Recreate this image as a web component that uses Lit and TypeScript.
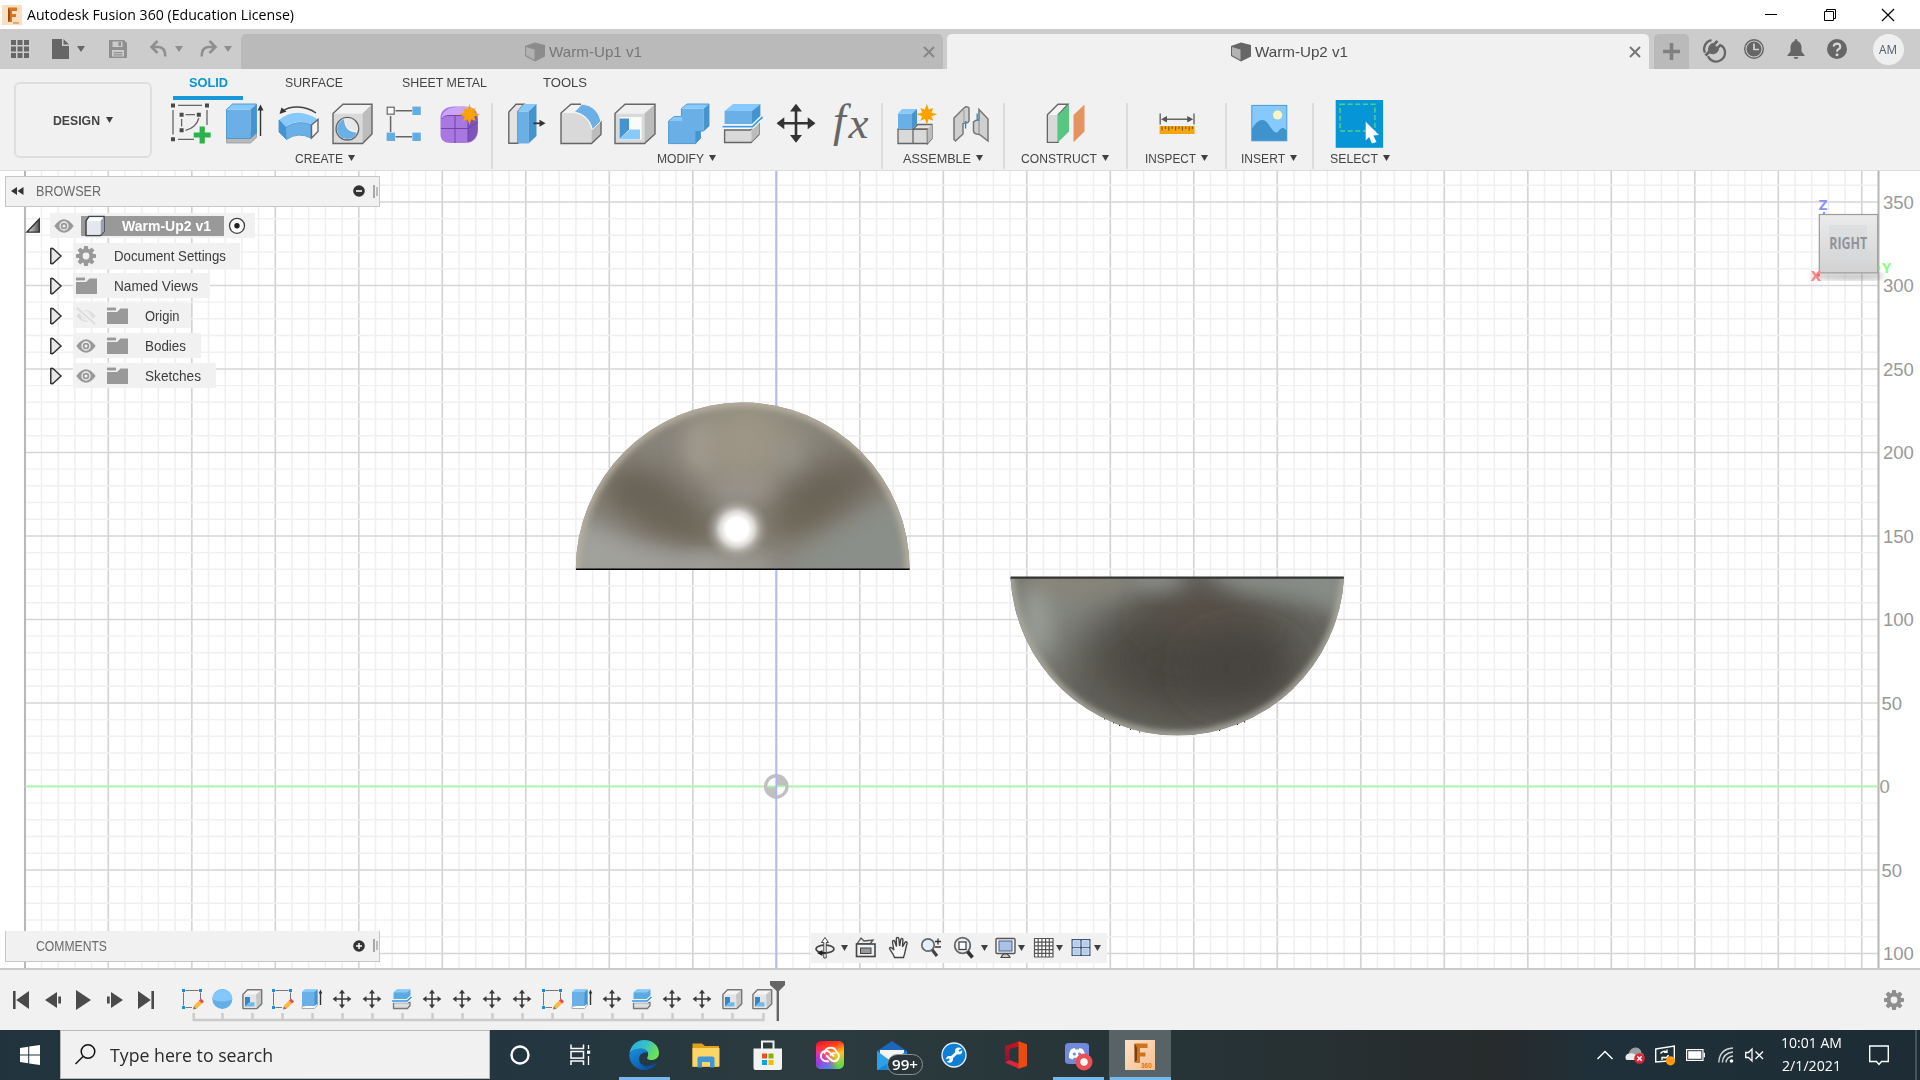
import { LitElement, html, svg, css } from "lit";
import { customElement, property } from "lit/decorators.js";

/** A single line of text condensed or stretched to a given width. */
@customElement("ui-text")
class UiText extends LitElement {
  @property({ type: Number }) w = 0;
  @property() text = "";
  static styles = css`
    :host { display: inline-block; white-space: nowrap; flex: none; }
    span { display: inline-block; transform-origin: 0 50%; }
  `;
  firstUpdated() {
    const s = this.renderRoot.querySelector("span") as HTMLElement;
    const n = s.offsetWidth ? s.getBoundingClientRect().width : 0;
    this.style.width = `${this.w}px`;
    if (n) s.style.transform = `scaleX(${this.w / n})`;
  }
  render() { return html`<span>${this.text}</span>`; }
}

const t = (text: string, w: number) => html`<ui-text .text=${text} .w=${w}></ui-text>`;
const icon = (w: number, h: number, body: unknown, cls = "") =>
  html`<svg class="ic ${cls}" width=${w} height=${h} viewBox="0 0 ${w} ${h}">${body}</svg>`;

const star = (cx: number, cy: number, r: number) => {
  const p: string[] = [];
  for (let i = 0; i < 16; i++) {
    const a = (i * Math.PI) / 8 - Math.PI / 2;
    const q = i % 2 ? r * 0.48 : i % 4 ? r * 0.86 : r;
    p.push(`${(cx + q * Math.cos(a)).toFixed(1)},${(cy + q * Math.sin(a)).toFixed(1)}`);
  }
  return svg`<polygon points=${p.join(" ")} fill="#f9a300"/>`;
};
const arrows = (cx: number, cy: number, r: number, w: number, hd: number, c: string) => svg`
  <path d="M${cx - r + 2} ${cy}H${cx + r - 2}M${cx} ${cy - r + 2}V${cy + r - 2}" stroke=${c} stroke-width=${w} fill="none"/>
  <path fill=${c} d="M${cx} ${cy - r}l${hd} ${hd * 1.3}h${-2 * hd}zM${cx} ${cy + r}l${hd} ${-hd * 1.3}h${-2 * hd}z
   M${cx - r} ${cy}l${hd * 1.3} ${hd}v${-2 * hd}zM${cx + r} ${cy}l${-hd * 1.3} ${hd}v${-2 * hd}z"/>`;

const G = "#666", F = "#d9d9d9", S = "#bcbcbc";
const B = "#6ab0e6", BL = "#87c9fb", BD = "#4694cf";

const I: Record<string, unknown> = {
  sketch: svg`
    <path d="M8 2.3H32M3 7V31.5M37 7V22M8 36.3H24" fill="none" stroke=${G} stroke-width="1.3"/>
    <path d="M15.5 11.7H25M11.6 16V23.5M28.8 15C27.5 21 22 26 15.5 27.3" fill="none" stroke=${G} stroke-width="1.3"/>
    <path fill="#4a4a4a" d="M1 .5h4v4h-4zM35 .5h4v4h-4zM1 34.3h4v4h-4zM9.6 9.7h4v4h-4zM26.8 9.7h4v4h-4zM9.6 25.3h4v4h-4z"/>
    <path d="M32.2 23.5V40.5M23.7 32H40.7" stroke="#2bb24c" stroke-width="5.2"/>`,
  extrude: svg`
    <path d="M2.5 35L2.5 40H26.5L32.5 34.5V28z" fill="#b9b9b9" stroke="#999" stroke-width=".8"/>
    <path d="M2.5 6.5H26.5V35.5H2.5z" fill=${B}/><path d="M2.5 6.5L8.5 1H32.5L26.5 6.5z" fill=${BL}/>
    <path d="M26.5 6.5L32.5 1V30L26.5 35.5z" fill=${BD}/><path d="M2.5 6.5L8.5 1H32.5V30L26.5 35.5H2.5z" fill="none" stroke=${BD} stroke-width=".9"/>
    <path d="M36.5 6V33" stroke="#333" stroke-width="1.4"/><path d="M36.5 1.5l3 6h-6z" fill="#333"/>`,
  revolve: svg`
    <path d="M4.5 8C12 2.5 27 2 38 10" fill="none" stroke="#444" stroke-width="1.5"/><path d="M1.5 11l2-6.5 5 4z" fill="#333"/>
    <path d="M1 17Q18 3 40.5 16.5L33 22Q20 14.5 8 24.5z" fill=${BL}/>
    <path d="M1 17L8 24.5Q20 16 33 22V35Q20 28.5 8.5 36.5L1 29z" fill=${B} stroke=${BD} stroke-width=".8"/>
    <path d="M1 17L8 24.5L8.5 36.5L1 29z" fill=${BD}/>
    <path d="M33.5 22L40 16.5V28.5L33.5 35z" fill="#f4f4f4" stroke=${G} stroke-width="1.4"/>`,
  hole: svg`
    <path d="M1 10.5H30.5V40.5H1z" fill=${F}/><path d="M1 10.5L11 1.3H40L30.5 10.5z" fill="#f2f2f2"/><path d="M30.5 10.5L40 1.3V31L30.5 40.5z" fill=${S}/>
    <path d="M1 10.5L11 1.3H40V31L30.5 40.5H1z" fill="none" stroke=${G} stroke-width="1.4"/>
    <circle cx="15.4" cy="25.7" r="11.3" fill="#f4f4f4" stroke=${G} stroke-width="1.4"/>
    <path d="M12 16.2A10.2 10.2 0 1 0 24.8 29.6Q12.5 29 12 16.2z" fill=${B}/><path d="M13 15.8Q13.2 28 25.3 28.2A10.3 10.3 0 0 0 13 15.8z" fill="#e8e8e8"/>`,
  pattern: svg`
    <path d="M9.5 7.7H26M4.6 13V29M9.5 33.7H26" stroke=${G} stroke-width="1.5"/>
    <rect x="1.2" y="4.2" width="7" height="7" fill="#fafafa" stroke=${G} stroke-width="1.2"/>
    <rect x="26.4" y="3.6" width="8.4" height="8.4" fill="#62ade6"/><rect x=".6" y="29.6" width="8.4" height="8.4" fill="#62ade6"/><rect x="26.4" y="29.6" width="8.4" height="8.4" fill="#62ade6"/>`,
  form: svg`
    <path d="M.5 15C.5 6 8 3 16 3.5H24C34 3.5 38 8 38 16V27C38 34 34 40 25 40H11C4 40 .5 37 .5 31z" fill="#a878e0"/>
    <path d="M2 13C5 5 12 4 20 4H30C35 6 34 10 28 12.5H9C5 12.5 4 14 2 17z" fill="#cba3f7"/>
    <path d="M28 13C33 10 37 10 37.5 17V28C37 34 32 39 28 39z" fill="#7f53b8"/>
    <path d="M1 25.5H28L37.5 19.5M15 12.5V40M2 16C4 12.5 7 12.5 10 12.5H28V39" fill="none" stroke="#6f45a5" stroke-width="1"/>${star(29.4, 11.5, 10.5)}`,
  press: svg`
    <path d="M3.8 9L11 1.3H19L13 8.5V40.3H3.8z" fill="#e3e3e3" stroke=${G} stroke-width="1.4"/>
    <path d="M12.5 8.5H23.5V40.5H12.5z" fill=${B}/><path d="M12.5 8.5L19 1H31.5L23.5 8.5z" fill=${BL}/><path d="M23.5 8.5L31.5 1V33L23.5 40.5z" fill=${BD}/>
    <path d="M28.5 20.3H36" stroke="#333" stroke-width="1.7"/><path d="M40.5 20.3l-6 3.5v-7z" fill="#333"/>`,
  fillet: svg`
    <path d="M2 10L12 1.3H23L14 9.5Q29 12 32.5 27V40.5H2z" fill="#f3f3f3"/><path d="M2 10H14Q29 12 32.5 27V40.5H2z" fill=${F}/>
    <path d="M32.5 27L42 18V31.5L32.5 40.5z" fill=${S}/>
    <path d="M22 1.3H12L2 10V40.5H32.5L42 31.5V18" fill="none" stroke=${G} stroke-width="1.4"/>
    <path d="M15.5 9L23 1Q38 2.5 42 18L33.5 26.5Q30 11.5 15.5 9z" fill=${B} stroke="#f1f1f1" stroke-width="1"/>`,
  shell: svg`
    <path d="M2 10.5H31.5V40.5H2z" fill=${F}/><path d="M2 10.5L12 1.3H42L31.5 10.5z" fill="#f0f0f0"/><path d="M31.5 10.5L42 1.3V31L31.5 40.5z" fill=${S}/>
    <path d="M2 10.5L12 1.3H42V31L31.5 40.5H2z" fill="none" stroke=${G} stroke-width="1.4"/>
    <rect x="6.6" y="14" width="22" height="22.7" fill="#fafafa"/><path d="M6.6 15.5H16V26.5L6.6 36z" fill=${BD}/><path d="M6.6 36.2L16.5 26.5H27V36.2z" fill=${BL}/>`,
  combine: svg`
    <path d="M1.6 18H14.4V5.7H36.6V28H29.4V40.6H1.6z" fill=${B}/>
    <path d="M14.4 5.7L20 1H42L36.6 5.7zM1.6 18L7 14H14.4V18z" fill=${BL}/><path d="M36.6 5.7L42 1V23L36.6 28zM28.4 28H33.5V35.5L28.4 40.6z" fill=${BD}/>
    <path d="M1.6 18L7 13.5H14.4V5.7L20 1H42V23L36.6 28H33.5V35.5L28.4 40.6H1.6z" fill="none" stroke=${BD} stroke-width=".9"/>`,
  split: svg`
    <path d="M3.6 27H29L38 19.5V31.5L30 39.5H3.6z" fill=${F} stroke=${G} stroke-width="1.4"/><path d="M30.5 27L38 20V31L30.5 39z" fill=${S}/>
    <path d="M3.6 8H31V21H3.6z" fill=${B}/><path d="M3.6 8L12 1H39.4L31 8z" fill=${BL}/><path d="M31 8L39.4 1V13L31 21z" fill=${BD}/>
    <path d="M1.5 23.7H31.5L41.5 14" fill="none" stroke="#fff" stroke-width="4"/><path d="M1.5 23.7H31.5L41.5 14" fill="none" stroke="#3f9ee6" stroke-width="1.8"/>`,
  move: arrows(21, 20.3, 19.5, 2.6, 6, "#333"),
  fx: svg`<text x="4" y="32.5" class="fx" font-size="46">f</text><text x="19.5" y="35.2" class="fx" font-size="45">x</text>`,
  comp: svg`
    <path d="M2 26H17V40.5H2zM17 26H31.5V40.5H17z" fill=${F} stroke=${G} stroke-width="1.3"/><path d="M17 26L22 21.5H36V35.5L31.5 40.5V26z" fill="#e4e4e4" stroke=${G} stroke-width="1.3"/><path d="M31.5 26L36 21.5V35.5L31.5 40.5z" fill=${S}/>
    <path d="M2 10.5H16V26H2z" fill=${B}/><path d="M2 10.5L6 6H21L16 10.5z" fill=${BL}/><path d="M16 10.5L21 6V21.5L16 26z" fill=${BD}/>${star(30.8, 11.3, 10.5)}`,
  joint: svg`
    <path d="M4 15L14 5Q17 2.5 19 5V18Q18 20.5 15 20L13 20.5V31L5.5 38L4 36.5z" fill="#cfcfcf" stroke="#777" stroke-width="1.5"/>
    <path d="M14 7V19" stroke="#999" stroke-width="1"/>
    <path d="M29 6.5L38 16V38L29.5 31.5Q23.5 31 23.5 28V19Q26 16.5 29 17z" fill="#cfcfcf" stroke="#777" stroke-width="1.5"/><path d="M29 17V31" stroke="#888" stroke-width="1"/>
    <path d="M15.6 18V25.5M27.2 10.5V18" stroke="#1f8fe0" stroke-width="1.4"/>`,
  construct: svg`
    <path d="M2.4 11.7L13 1.3H23L13 12V39.2H2.4z" fill="#f4f4f4" stroke=${G} stroke-width="1.4"/><path d="M3 12H12.5V38.5H3z" fill=${F}/>
    <path d="M13 12L24 1.5V28.5L13 39.2z" fill="#58c683"/><path d="M28.5 12L39.5 1.5V28.5L28.5 39.2z" fill="#e6945f"/>`,
  inspect: svg`
    <path d="M4.2 10.5V21.5M38 10.5V21.5M8 16.3H34" stroke=${G} stroke-width="1.4"/><path fill="#555" d="M5 16.3l6-3.2v6.4zM37.2 16.3l-6-3.2v6.4z"/>
    <rect x="3.6" y="23" width="35" height="8" fill="#f7a50e"/><path d="M6 23.5v4M9.4 23.5v2.4M12.8 23.5v4M16.2 23.5v2.4M19.6 23.5v4M23 23.5v2.4M26.4 23.5v4M29.8 23.5v2.4M33.2 23.5v4M36.4 23.5v2.4" stroke="#6d5a2a" stroke-width="1.1"/>`,
  insert: svg`
    <rect x="2.8" y="2.4" width="35" height="35.4" fill="#86c9fc"/><path d="M2.8 26C9 16 15 14 20 22C23 27 26 31 29 29C32 24 35 24 37.8 28V37.8H2.8z" fill="#3f92cb"/>
    <circle cx="28.6" cy="12" r="4.6" fill="#fdf6c3"/><rect x="2.8" y="2.4" width="35" height="35.4" fill="none" stroke="#4a9bd6" stroke-width="1"/>`,
  select: svg`
    <g transform="translate(-.5 0)"><rect x="-3.8" y="-3" width="47.4" height="47.8" fill="#0696d7"/><rect x=".6" y="1.3" width="34.8" height="26.6" fill="none" stroke="#54cf87" stroke-width="1.5" stroke-dasharray="5 2.6"/>
    <path d="M26.2 18.8L39.5 32L33.8 32.4L37 39L32.4 40.6L29.6 34L26.2 37.5z" fill="#fff"/></g>`,
};

const M: Record<string, unknown> = {
  sketch: svg`<path d="M3.5 1.5H16.5M1.5 3.5V16.5M18.5 3.5V10M3.5 18.5H10" fill="none" stroke="#777" stroke-width="1"/>
    <path fill="#1a8fe3" d="M0 0h3v3h-3zM17 0h3v3h-3zM0 17h3v3h-3z"/>
    <path d="M13 18.5L19 12.5" stroke="#f8bb3c" stroke-width="4"/><path d="M18.5 13l2-2" stroke="#ee4653" stroke-width="4"/><path d="M11 20.5l.8-3.3 2.6 2.5z" fill="#777"/>`,
  sphere: svg`<circle cx="10.3" cy="10" r="10" fill="#63aee6"/><path d="M.3 10.5A10 10 0 0 1 20.3 10.5Q10 14.5 .3 10.5z" fill="#84c7fa"/>`,
  shell: svg`<path d="M1 5.5L5.5 1H19.5L14 5.5z" fill="#f4f4f4"/><path d="M.9 5.5H14V19.5H.9z" fill="#e4e4e4"/><path d="M14 5.5L19.5 1V15L14.5 19.5z" fill="#c6c6c6"/><path d="M.9 5.5L5.5 .8H19.7V15L15 19.6H.9z" fill="none" stroke="#777" stroke-width="1.4" stroke-linejoin="round"/><path d="M3 8H8V13L3 17.5z" fill="#3786c4"/><path d="M3 17.5L7.5 13.3H12.5V17.5z" fill="#6fb9f0"/>`,
  extrude: svg`<path d="M0 17.5V19.5H12.5L15.5 16V14z" fill="#fff" stroke="#aaa"/><path d="M0 3L3 .5H15.5V14.5L12.5 17H0z" fill="#6ab0e6"/><path d="M12.5 3L15.5 .5V14.5L12.5 17z" fill="#4694cf"/><path d="M0 3L3 .5H15.5L12.5 3z" fill="#87c9fb"/><path d="M18.5 3V16" stroke="#333" stroke-width="1.4"/><path d="M18.5 .5l1.8 4h-3.6z" fill="#333"/>`,
  split: svg`<path d="M1.5 13.5H18V16.5L15.5 19.5H1.5z" fill="#ddd" stroke="#777" stroke-width="1.3"/><path d="M1.5 3.5L5 .5H18.5V8L15 10.5H1.5z" fill="#5fa9e2"/><path d="M1.5 3.5L5 .5H18.5L15 3.5z" fill="#87c9fb"/><path d="M0 12H15L19.5 8" fill="none" stroke="#fff" stroke-width="3.6"/><path d="M0 12H15L19.5 8" fill="none" stroke="#2f93e4" stroke-width="1.6"/>`,
  move: arrows(10, 10, 9.4, 1.6, 3, "#3a3a3a"),
};

const gear = (c: string) => icon(20, 20, svg`
  <g transform="translate(10 10)">${[0, 45, 90, 135].map(a => svg`<rect x="-2.1" y="-10" width="4.2" height="20" rx=".8" fill=${c} transform="rotate(${a})"/>`)}
  <circle r="5.4" fill="none" stroke=${c} stroke-width="4"/><circle r="3.4" fill="#f1f1f1"/></g>`);
const eye = icon(20, 14, svg`<path d="M.3 7Q10-6.5 19.7 7Q10 20.5 .3 7z" fill="#999"/><circle cx="10" cy="7" r="4" fill="none" stroke="#f1f1f1" stroke-width="1.3"/><circle cx="10" cy="7" r="1.5" fill="#f1f1f1"/>`);
const eyeOff = icon(20, 18, svg`<path d="M.5 9Q10-2.5 19.5 9Q10 20.5 .5 9z" fill="#dcdcdc"/><circle cx="10" cy="9" r="4" fill="none" stroke="#f1f1f1" stroke-width="1.4"/><path d="M0 0L20 17.5" stroke="#f1f1f1" stroke-width="5"/><path d="M1 1L19 17" stroke="#dcdcdc" stroke-width="1.8"/>`);
const folder = icon(21, 17, svg`<path d="M0 17V5H10L13.5 1.5H21V17z" fill="#999"/><path d="M0 3.4V.6H9V3.4z" fill="#999"/>`);
const tabCube = (dim: boolean) => icon(20, 20, dim
  ? svg`<path d="M0 4L10 .5L20 3V14.5L10 19.5L0 14z" fill="#8c8c8c"/><path d="M1 5L9.5 7.5V18L1 13.2z" fill="#b0b0b0"/>`
  : svg`<path d="M0 4L10 .5L20 3V14.5L10 19.5L0 14z" fill="#666"/><path d="M1 5L9.5 7.5V18L1 13.2z" fill="#b3b3b3"/>`);
const tri = (w = 7, c = "#404040") => icon(w, 6, svg`<path d="M0 0H${w}L${w / 2} 6z" fill=${c}/>`);
const cross = (c: string) => icon(12, 12, svg`<path d="M1 1L11 11M11 1L1 11" stroke=${c} stroke-width="2"/>`);
const expander = icon(12, 18, svg`<path d="M.8 1.5Q1.5 .8 3.5 2L11 9L3.5 16Q1.5 17.2 .8 16.5z" fill="#e9e9e9" stroke="#333" stroke-width="1.5"/>`);

const GROUPS: [string, number, number, string[]][] = [
  ["CREATE", 334, 48, ["sketch", "extrude", "revolve", "hole", "pattern", "form"]],
  ["MODIFY", 390, 47, ["press", "fillet", "shell", "combine", "split", "move", "fx"]],
  ["ASSEMBLE", 122, 68, ["comp", "joint"]],
  ["CONSTRUCT", 123, 76, ["construct"]],
  ["INSPECT", 99, 51, ["inspect"]],
  ["INSERT", 87, 44, ["insert"]],
  ["SELECT", 92, 48, ["select"]],
];
const TIMELINE = "sketch sphere shell sketch extrude move move split move move move move sketch extrude move split move move shell shell".split(" ");

const STEP = 83.5, OX = 776.3, OY = 786.4;

function grid() {
  const out: unknown[] = [];
  for (let i = -45; i <= 66; i++) {
    const x = OX + (i * STEP) / 5;
    const major = i % 5 === 0;
    out.push(svg`<path d="M${x} 171V968" stroke=${major ? "#d4d4d4" : "#efefef"} stroke-width=${major ? 1.7 : 1.5}/>`);
  }
  for (let j = -10; j <= 36; j++) {
    const y = OY - (j * STEP) / 5;
    const major = j % 5 === 0;
    out.push(svg`<path d="M25 ${y}H1878.5" stroke=${major ? "#d6d6d6" : "#f0f0f0"} stroke-width=${major ? 1.5 : 1.4}/>`);
  }
  return out;
}

const scene = svg`
  <defs>
    <clipPath id="h1"><path d="M575.8 569.5A166.9 166.9 0 0 1 909.6 569.5z"/></clipPath>
    <clipPath id="h2"><path d="M1010.5 577.5A167 167 0 0 0 1344 577.5z"/></clipPath>
    <filter id="b8" x="-60%" y="-60%" width="220%" height="220%"><feGaussianBlur stdDeviation="10"/></filter>
    <filter id="b14" x="-60%" y="-60%" width="220%" height="220%"><feGaussianBlur stdDeviation="17"/></filter>
    <filter id="b20" x="-80%" y="-80%" width="260%" height="260%"><feGaussianBlur stdDeviation="22"/></filter>
    <filter id="b3" x="-20%" y="-20%" width="140%" height="140%"><feGaussianBlur stdDeviation="3"/></filter>
    <radialGradient id="hl"><stop offset="0" stop-color="#fff"/><stop offset=".35" stop-color="#fff"/><stop offset=".55" stop-color="#efedea" stop-opacity=".8"/><stop offset=".75" stop-color="#c4c1bb" stop-opacity=".4"/><stop offset="1" stop-color="#a09d96" stop-opacity="0"/></radialGradient>
    <linearGradient id="cube" x1="0" y1="0" x2="0" y2="1"><stop offset="0" stop-color="#ebebeb"/><stop offset="1" stop-color="#d2d2d2"/></linearGradient>
  </defs>
  <rect x="0" y="171" width="1920" height="797" fill="#fff"/>
  ${grid()}
  <path d="M25 171V968M1878.5 171V968" stroke="#b8b8b8" stroke-width="2"/>
  <path d="M25 ${OY}H1878.5" stroke="#aaf7aa" stroke-width="1.9"/>
  <path d="M${OX} 171V968" stroke="#b6b6ff" stroke-width="1.9"/>
  <circle cx=${OX} cy=${OY} r="12.3" fill="#c0c0c0"/>
  <path d="M${OX} ${OY}V${OY - 9}A9 9 0 0 0 ${OX - 9} ${OY}zM${OX} ${OY}H${OX + 9}A9 9 0 0 1 ${OX} ${OY + 9}z" fill="#fff"/>
  <path d="M${OX - 9} ${OY}h18" stroke="#aaf7aa" stroke-width="1.8"/><path d="M${OX} ${OY - 12}v24" stroke="#b0b0f6" stroke-width="1.8"/>
  <g clip-path="url(#h1)">
    <rect x="570" y="400" width="345" height="172" fill="#88847a"/>
    <ellipse cx="745" cy="442" rx="48" ry="44" fill="#9d9585" filter="url(#b14)"/>
    <ellipse cx="700" cy="448" rx="14" ry="28" fill="#a29a8f" filter="url(#b8)"/>
    <ellipse cx="790" cy="460" rx="18" ry="16" fill="#97948b" filter="url(#b8)"/>
    <ellipse cx="655" cy="502" rx="62" ry="25" transform="rotate(28 655 502)" fill="#676256" filter="url(#b14)"/>
    <ellipse cx="638" cy="492" rx="26" ry="13" fill="#6a6559" filter="url(#b8)"/>
    <ellipse cx="676" cy="523" rx="42" ry="11" transform="rotate(17 676 523)" fill="#6a6453" opacity=".65" filter="url(#b8)"/>
    <ellipse cx="826" cy="491" rx="62" ry="25" transform="rotate(-28 826 491)" fill="#666155" filter="url(#b14)"/>
    <ellipse cx="800" cy="517" rx="34" ry="12" transform="rotate(-32 800 517)" fill="#6b6553" opacity=".65" filter="url(#b8)"/>
    <ellipse cx="742" cy="488" rx="32" ry="10" fill="#9b978f" filter="url(#b8)"/>
    <path d="M570 515L640 546L720 564V580H570z" fill="#a1a19d" filter="url(#b8)"/>
    <path d="M775 580L790 562L850 524L915 485V580z" fill="#8a8f89" filter="url(#b8)"/>
    <rect x="690" y="557" width="80" height="18" fill="#a3a19a" filter="url(#b8)"/>
    <path d="M575.8 575V569.5A166.9 166.9 0 0 1 909.6 569.5V575" fill="none" stroke="#b8b1a2" stroke-width="8" filter="url(#b3)"/>
    <circle cx="737" cy="529" r="32" fill="url(#hl)"/>
  </g>
  <path d="M576 569.3H909.6" stroke="#000" stroke-width="1.4"/>
  <g clip-path="url(#h2)">
    <rect x="1005" y="570" width="345" height="170" fill="#64635c"/>
    <ellipse cx="1195" cy="660" rx="100" ry="55" fill="#4a4740" filter="url(#b20)"/>
    <ellipse cx="1205" cy="614" rx="58" ry="20" fill="#564f46" filter="url(#b14)"/>
    <ellipse cx="1240" cy="668" rx="48" ry="26" fill="#45433c" filter="url(#b20)"/>
    <path d="M1000 570H1150L1110 600L1065 640L1055 690L1010 650z" fill="#84877f" filter="url(#b14)"/>
    <rect x="1030" y="568" width="95" height="26" fill="#89857a" filter="url(#b8)"/>
    <ellipse cx="1036" cy="622" rx="12" ry="34" fill="#9b9f97" filter="url(#b8)"/>
    <ellipse cx="1155" cy="578" rx="32" ry="12" fill="#8e918c" filter="url(#b8)"/>
    <path d="M1205 562H1350V622Q1320 602 1240 592L1210 576z" fill="#878c87" filter="url(#b8)"/>
    <path d="M1010.5 570V577.5A167 167 0 0 0 1344 577.5V570" fill="none" stroke="#acaba1" stroke-width="7.5" filter="url(#b3)"/>
  </g>
  <path d="M1010.6 577.7H1343.8" stroke="#333" stroke-width="2.2"/>
  <path fill="#222" d="M1104 718.5h1.1v1.1h-1.1zM1113 722.5h1.1v1.1h-1.1zM1119 725h1.1v1.1h-1.1zM1130 729h1.1v1.1h-1.1zM1139 731.5h1.1v1.1h-1.1zM1219 730h1.1v1.1h-1.1zM1237 724h1.1v1.1h-1.1zM1244 721.3h1.1v1.1h-1.1z"/>
  ${([[350, 7], [300, 6], [250, 5], [200, 4], [150, 3], [100, 2], [50, 1], [0, 0], [50, -1], [100, -2]] as [number, number][]).map(
    ([v, k]) => svg`<text class="ruler" x=${v === 0 ? 1879.5 : v === 50 ? 1881.5 : 1883} y=${OY - k * STEP + 6.6}>${v}</text>`)}
  <path d="M1812 274H1882V278Q1850 281 1812 277z" fill="#888" opacity=".7" filter="url(#b3)"/>
  <rect x="1819.3" y="214.5" width="58.4" height="58.4" fill="url(#cube)" stroke="#9b9b9b" stroke-width="1.2"/>
  <rect x="1829" y="225" width="38" height="36" fill="#d5d8dc" opacity=".55"/>
  <text class="face" x="1829.3" y="249" textLength="38" lengthAdjust="spacingAndGlyphs">RIGHT</text>
  <text class="axis" x="1818.7" y="210.4" fill="#8f8fff">Z</text><text class="axis" x="1811" y="281.2" fill="#ff8080">X</text><text class="axis" x="1882" y="273" fill="#8dfa8d">Y</text>
  <circle cx="1824" cy="213" r="1.2" fill="#8f8fff"/><circle cx="1879" cy="268" r="1.4" fill="#6cf06c"/><circle cx="1818.5" cy="275" r="1.8" fill="#f66"/>`;

const navIcons = {
  orbit: icon(24, 24, svg`<ellipse cx="12" cy="13" rx="9" ry="3.8" fill="none" stroke="#444" stroke-width="1.7"/><path d="M10.8 22V6.5H8.5L12 1.5L15.5 6.5H13.2V22z" fill="#fff" stroke="#444" stroke-width="1"/><path d="M4 17l5.5-3v6z" fill="#222"/><path d="M6 17H13" stroke="#222" stroke-width="1.8"/>`),
  look: icon(22, 24, svg`<path d="M2 8L6 2L9 5L18 4L15 8z" fill="#e6eaee" stroke="#555" stroke-width="1.3"/><rect x="1.5" y="8" width="18.5" height="12.5" fill="#eef1f4" stroke="#444" stroke-width="1.6"/><rect x="5.5" y="12" width="10.5" height="5.5" fill="#999" stroke="#444"/>`),
  pan: icon(22, 24, svg`<path d="M6.5 21.5C5 17 2.5 15 1.5 12.5C2 10.8 4 11.5 5.8 14L4.5 6C4.5 4 6.4 4 7 6L8.5 10.5L8.3 3C8.4 1 10.6 1 10.9 3L11.6 10L12.8 3.5C13.3 1.8 15 2.2 14.9 4L14.5 10.8L17 6.5C18.2 5 19.6 6.2 19 7.8C17.5 12 17.5 16 15.5 21.5z" fill="#f8f8f8" stroke="#444" stroke-width="1.4"/>`),
  zoom: icon(22, 24, svg`<circle cx="8" cy="9" r="6.2" fill="#e4eef4" stroke="#666" stroke-width="1.7"/><path d="M12.3 14L17 20" stroke="#444" stroke-width="3.2"/><path d="M18 2.5v6M15 5.5h6M15 11h6" stroke="#333" stroke-width="1.3"/>`),
  fit: icon(22, 24, svg`<circle cx="9.5" cy="9.5" r="7.8" fill="#e9eff3" stroke="#666" stroke-width="1.8"/><rect x="6" y="6" width="7" height="7.5" fill="#fff" stroke="#444" stroke-width="1.3"/><path d="M14.5 15.5L19.5 21.5" stroke="#333" stroke-width="3.6"/>`),
  display: icon(21, 24, svg`<rect x="1" y="2.5" width="19" height="15" rx="1" fill="#f4f4f4" stroke="#555" stroke-width="1.4"/><rect x="4" y="5" width="13" height="10" fill="#a9c2e8" stroke="#4a5f87" stroke-width="1"/><path d="M6 21.5Q7 19 9 18H12Q14 19 15 21.5z" fill="#ccc" stroke="#444" stroke-width="1.2"/>`),
  grid: icon(21, 24, svg`<rect x="1" y="2" width="19" height="19" fill="#fff"/><path d="M1 2.5H20M1 6.2H20M1 9.9H20M1 13.6H20M1 17.3H20M1 21H20M1.5 2V21.5M5.2 2V21.5M8.9 2V21.5M12.6 2V21.5M16.3 2V21.5M20 2V21.5" stroke="#555" stroke-width="1.2"/>`),
  views: icon(20, 24, svg`<rect x=".5" y="3" width="19" height="17" fill="#3e5272"/><path fill="#b5cdee" stroke="#dce8f8" stroke-width=".8" d="M2 4.5h7v6.2h-7zM11 4.5h7v6.2h-7zM2 12.5h7v6.2h-7zM11 12.5h7v6.2h-7z"/>`),
};

const TB: [unknown, string][] = [
  [icon(22, 22, svg`<circle cx="11" cy="11" r="8.5" fill="none" stroke="#fff" stroke-width="2.4"/>`), ""],
  [icon(26, 22, svg`<path d="M2 .5V4.5H14.5V.5M2 21V17H14.5V21" fill="none" stroke="#fff" stroke-width="1.5"/><rect x="2" y="7.5" width="12.5" height="6.6" fill="none" stroke="#fff" stroke-width="1.5"/><path d="M19.5 1V5M19.5 12V21" stroke="#fff" stroke-width="1.3"/><rect x="18" y="6.6" width="3.2" height="3.2" fill="#fff"/>`), ""],
  [icon(30, 30, svg`<defs><linearGradient id="eg1" x1="0" y1="0" x2="1" y2=".4"><stop offset="0" stop-color="#2aa7e2"/><stop offset=".55" stop-color="#35c1c8"/><stop offset="1" stop-color="#6be05a"/></linearGradient><linearGradient id="eg2" x1="0" y1="0" x2=".6" y2="1"><stop offset="0" stop-color="#1b8fe0"/><stop offset="1" stop-color="#0c57a8"/></linearGradient></defs>
    <path d="M.3 14C1.5 5.5 7.5 0 15 0C24 0 30 6 30 13C30 17.5 26.5 20 22.5 20C19 20 17.5 18.8 18.5 17C21 13 17 8.8 12.5 8.8C7 8.8 2 10.5 .3 14z" fill="url(#eg1)"/>
    <path d="M.3 15C2 10.5 6 8.8 12 8.8C16.5 8.8 17.5 11 18 12.5C12 12 9.5 16.5 10.2 20C11.2 25.5 17.5 28.5 26.5 24.5C24 28 20 30 15 30C6.5 30 0 23 .3 15z" fill="url(#eg2)"/>
    <path d="M18.3 12.6C12.5 12 9.6 16.5 10.3 20C11.3 25.4 18 28.5 28 22.8C27 25.5 24 28 21 29C12 28 8.5 21 11 16C12.5 13 15 11.5 18.3 12.6z" fill="#0d4f9a"/>`), "open"],
  [icon(28, 26, svg`<path d="M.5 1.5H10L13 4H27V25H.5z" fill="#dfa21c"/><path d="M.5 6H27.5V24.5H.5z" fill="#fbd667"/><path d="M5.5 25.5V16.5Q5.5 14.5 7.5 14.5H20.5Q22.5 14.5 22.5 16.5V25.5H18V20H10V25.5z" fill="#3f97d8"/>`), ""],
  [icon(30, 32, svg`<path d="M9 10V2.5H20.5V10" fill="none" stroke="#f2f2f2" stroke-width="2"/><path d="M.5 9.5H29V29Q29 31 27 31H2.5Q.5 31 .5 29z" fill="#f2f2f2"/><path fill="#f04e23" d="M9 14.5h5v5h-5z"/><path fill="#7cba01" d="M15.5 14.5h5v5h-5z"/><path fill="#03a4ee" d="M9 21h5v5h-5z"/><path fill="#feb800" d="M15.5 21h5v5h-5z"/>`), ""],
  [icon(28, 28, svg`<defs><linearGradient id="cc1" x1=".2" y1="0" x2=".6" y2="1"><stop offset="0" stop-color="#f8102c"/><stop offset=".3" stop-color="#ff4a1c"/><stop offset=".6" stop-color="#ffc21a"/><stop offset="1" stop-color="#5fd84a"/></linearGradient><radialGradient id="cc2" cx="0" cy=".85" r=".75"><stop offset="0" stop-color="#7a3cf0"/><stop offset=".5" stop-color="#d82ad0" stop-opacity=".9"/><stop offset="1" stop-color="#ff2a80" stop-opacity="0"/></radialGradient><radialGradient id="cc3" cx=".4" cy="1.05" r=".45"><stop offset="0" stop-color="#2f8cff"/><stop offset="1" stop-color="#2f8cff" stop-opacity="0"/></radialGradient></defs>
    <rect width="28" height="28" rx="5" fill="url(#cc1)"/><rect width="28" height="28" rx="5" fill="url(#cc2)"/><rect width="28" height="28" rx="5" fill="url(#cc3)"/>
    <path d="M12 20.2H10.2A5.2 5.2 0 1 1 13.6 11.2L17.5 15" fill="none" stroke="#fff" stroke-width="1.9" stroke-linecap="round"/><path d="M8.5 12A6.2 6.2 0 0 1 20.5 11A5 5 0 0 1 18.5 20.2Q16 20.2 14.5 18.5L10.5 14.8" fill="none" stroke="#fff" stroke-width="1.9" stroke-linecap="round"/><path d="M14 14.5L15.5 13Q17.5 11.5 19.5 12.5" fill="none" stroke="#fff" stroke-width="1.6"/>`), ""],
  [html`<span class="mail">${icon(30, 29, svg`<path d="M0 10L15 0L30 10V28H0z" fill="#1d66b8"/><path d="M3 9H27V20H3z" fill="#f5f5f5"/><path d="M0 10L15 21L30 10V29H0z" fill="#2ba2e8"/><path d="M0 29L19 17L30 10V29z" fill="#1a86d4"/>`)}<span class="badge">${t("99+", 26)}</span></span>`, ""],
  [icon(26, 26, svg`<circle cx="13" cy="13" r="12" fill="#0d7fd6" stroke="#e9f3fb" stroke-width="1.3"/><path d="M9 17L17 9.5" stroke="#fff" stroke-width="3"/><circle cx="8.5" cy="17.3" r="3.4" fill="#fff"/><circle cx="17.6" cy="9" r="3.6" fill="#fff"/><path d="M4.5 18.8L8.3 17.3M18 9L21.5 7" stroke="#0d7fd6" stroke-width="2"/>`), ""],
  [icon(24, 28, svg`<defs><linearGradient id="of" x1="0" y1="0" x2="0" y2="1"><stop offset="0" stop-color="#c2181d"/><stop offset="1" stop-color="#8d0f3b"/></linearGradient></defs><path d="M15 .3L1 5V21.5L5.5 19V8L15 5.5z" fill="url(#of)"/><path d="M1 21.5L5.5 19L15 22.5V27.8z" fill="#d8263c"/><path d="M14.5 .3L23 3.2V25L14.5 27.8z" fill="#ea4b13"/>`), ""],
  [icon(30, 30, svg`<path d="M6 3H22Q26 3 26 6V27L21 24H6Q2 24 2 21V6Q2 3 6 3z" fill="#7289da"/><path d="M6 18Q5.5 12 8.5 9L11.5 8L12.5 9.5H15.5L16.5 8L19.5 9Q22.5 12 22 18L18.5 19.5L17 17.8H11L9.5 19.5z" fill="#fff"/><circle cx="11.3" cy="14" r="1.6" fill="#7289da"/><circle cx="16.6" cy="14" r="1.6" fill="#7289da"/><circle cx="21" cy="22" r="8.5" fill="#ec4f57"/><circle cx="21" cy="22" r="3.7" fill="#fff"/>`), "open"],
  [icon(30, 30, svg`<defs><linearGradient id="fu" x1="0" y1="0" x2="1" y2="1"><stop offset="0" stop-color="#fbe3cb"/><stop offset="1" stop-color="#f5bf8e"/></linearGradient></defs><rect width="30" height="30" fill="url(#fu)"/><path d="M9.5 3.5H22.5V8H15V12.5H20.5V16.5H15V23H10.5z" fill="#d07320"/><path d="M9.5 3.5L12 7.5V20L9.5 23z" fill="#7a3d10"/><text x="16" y="28.2" font-size="6.5" font-weight="700" fill="#e2701c" font-family="Liberation Sans">360</text>`), "open active"],
];

@customElement("app-root")
class AppRoot extends LitElement {
  static styles = css`
    :host { display: block; width: 1920px; height: 1080px; overflow: hidden; font-family: "Liberation Sans", Arial, sans-serif; color: #3c3c3c; background: #f1f1f1; }
    * { box-sizing: border-box; }
    .ic { display: block; flex: none; overflow: visible; }
    .title { height: 29px; background: #fff; display: flex; align-items: center; padding: 0 26px 0 2px; color: #000; font: 14.5px "Open Sans", sans-serif; }
    .title .name { margin-left: 5px; flex: 1; display: flex; }
    .title .wb { display: flex; gap: 46.5px; align-items: center; }
    .tabs { height: 40px; background: #ccc; display: flex; align-items: flex-end; }
    .quick { width: 241px; height: 40px; display: flex; align-items: center; padding-left: 11px; }
    .tab { height: 35px; display: flex; align-items: center; border-radius: 5px 5px 0 0; font-size: 14.8px; }
    .tab .mid { flex: 1; display: flex; align-items: center; gap: 4px; }
    .t1 { width: 702px; background: #bababa; color: #777; padding: 0 8px 0 284px; margin-right: 4px; }
    .t2 { width: 702px; background: #f1f1f1; color: #4a4a4a; padding: 0 8px 0 284px; margin-right: 5px; }
    .plus { width: 35px; height: 35px; background: #bababa; border-radius: 5px 5px 0 0; display: flex; align-items: center; justify-content: center; }
    .help { flex: 1; height: 40px; display: flex; align-items: center; gap: 21.4px; padding-left: 14px; }
    .avatar { width: 31px; height: 31px; border-radius: 50%; background: #efefef; display: flex; align-items: center; justify-content: center; font: 12.5px "Open Sans", sans-serif; color: #4f5a6b; margin-left: 4px; }
    .ribbon { height: 102px; background: #f1f1f1; border-bottom: 1px solid #dcdcdc; display: flex; font-size: 13.7px; color: #444; }
    .design { width: 138px; height: 76px; margin: 12.5px 6.5px 0 14px; border: 2px solid #dedede; border-radius: 6px; display: flex; align-items: center; justify-content: center; gap: 6px; font-weight: 700; padding: 1px 1px 0 0; }
    .rmain { display: flex; flex-direction: column; }
    .rtabs { display: flex; height: 31px; padding-top: 5px; line-height: 18px; }
    .rt { display: flex; justify-content: center; height: 26px; border-bottom: 0; }
    .rt.on { color: #0696d7; font-weight: 700; border-bottom: 4px solid #1798d9; width: 70px; margin-left: 14.5px; }
    .groups { display: flex; }
    .group { height: 66px; margin-top: 2.5px; border-right: 2px solid #dcdcdc; display: flex; flex-direction: column; align-items: center; }
    .group:last-child { border: 0; }
    .icons { display: flex; gap: 14px; height: 40px; }
    .lab { display: flex; align-items: center; gap: 5px; height: 18px; margin-top: 7px; }
    .lab .ic { margin-top: -2px; }
    .fx { font-family: "Liberation Serif", serif; font-style: italic; fill: #666; }
    .canvas { height: 797px; position: relative; overflow: hidden; }
    .ruler { font: 18.5px "Liberation Sans", sans-serif; fill: #999; }
    .face { font: 700 16px "Open Sans", sans-serif; fill: #909499; }
    .axis { font: 700 15px "Open Sans", sans-serif; }
    .panel { position: absolute; left: 5px; width: 375px; height: 31px; background: #f1f1f1; border: 1px solid #c6c6c6; border-bottom-width: 1.5px; display: flex; align-items: center; font-size: 14px; color: #6a6a6a; padding: 0 1px 1px 5px; }
    .browser { top: 5px; } .comments { top: 760px; border-top: 0; }
    .panel .nm { flex: 1; display: flex; margin-left: 12px; }
    .comments .nm { margin-left: 25px; }
    .tree { position: absolute; left: 26px; top: 42px; display: flex; flex-direction: column; gap: 5px; font-size: 14.2px; }
    .row { display: flex; align-items: center; height: 25px; padding-left: 24px; }
    .row.root { padding-left: 0; }
    .chip { display: flex; align-items: center; height: 25px; background: #f1f1f1; margin-left: 11px; padding-left: 3.3px; }
    .root .chip { margin-left: 10px; padding-left: 4px; width: 205px; }
    .sel { width: 143px; height: 20px; background: #999; color: #fff; font-weight: 700; display: flex; align-items: center; padding-left: 4px; gap: 17px; margin: 0 5px 0 7px; }
    .nav { position: absolute; left: 811px; top: 762px; width: 296px; height: 30px; background: #f1f1f1; display: flex; align-items: center; }
    .timeline { height: 62px; border-top: 2px solid #cacaca; background: #f1f1f1; display: flex; padding: 0 16px 0 13px; }
    .play { display: flex; gap: 15.5px; width: 169px; height: 60px; align-items: center; }
    .feats { display: flex; flex-direction: column; width: 582px; padding-top: 18.5px; }
    .fi { display: flex; gap: 10px; height: 20px; }
    .tgear { flex: 1; display: flex; justify-content: flex-end; align-items: center; }
    .taskbar { height: 50px; display: flex; background: linear-gradient(90deg, #21333d 0, #24363f 30%, #2c3b3f 42%, #263438 60%, #272b2c 78%, #20303a 83%, #1d2c34 100%); color: #fff; font-family: "Open Sans", sans-serif; }
    .start { width: 60px; display: flex; align-items: center; justify-content: center; }
    .search { width: 430px; height: 49px; margin-right: -1px; background: #f1f1f1; border: 1px solid #b8b8b8; color: #2b2b2b; display: flex; align-items: center; padding-left: 14px; gap: 14px; font-size: 18px; }
    .slot { width: 62px; height: 50px; display: flex; align-items: center; justify-content: center; }
    .slot.open { background: linear-gradient(#76b9ed, #76b9ed) center bottom / 51px 3px no-repeat; }
    .slot.active { background: linear-gradient(#76b9ed, #76b9ed) center bottom / 61px 3px no-repeat, #586368; }
    .mail { position: relative; display: block; }
    .badge { position: absolute; left: 9.5px; top: 13px; width: 36px; height: 21px; border-radius: 11px; border: 1px solid #8b9396; background: #2a353a; display: flex; align-items: center; justify-content: center; font-size: 14px; font-weight: 600; }
    .tray { margin-left: auto; display: flex; align-items: center; width: 323px; }
    .clock { display: flex; flex-direction: column; align-items: center; width: 64px; margin-left: 15.5px; font-size: 14.8px; line-height: 23px; padding-bottom: 2px; }
  `;

  private tree(name: string, w: number, total: number, icons: unknown) {
    return html`<div class="row">${expander}<div class="chip" style="width:${total}px">${icons}${t(name, w)}</div></div>`;
  }

  render() {
    const sp = (w: number) => html`<i style="width:${w}px;flex:none"></i>`;
    const grip = icon(5, 13, svg`<path d="M1 0V13" stroke="#777" stroke-width="1.2"/><path d="M4 2V11" stroke="#999" stroke-width="1.2"/>`);
    return html`
      <div class="title">
        ${icon(20, 20, svg`<rect width="20" height="20" fill="#fbdfc2"/><path d="M6 2.5H15V6H10V9H14V12H10V17H6z" fill="#d5751f"/><path d="M6 2.5L8 6V15L6 17z" fill="#9a4b12"/><path d="M11 18h6" stroke="#ef9a4d" stroke-width="1.6"/>`)}
        <div class="name">${t("Autodesk Fusion 360 (Education License)", 267)}</div>
        <div class="wb">
          ${icon(12, 12, svg`<path d="M0 5.5H12" stroke="#000" stroke-width="1"/>`)}
          ${icon(12, 12, svg`<path d="M.5 2.5H9.5V11.5H.5zM2.5 2.5V.5H11.5V9.5H9.5" fill="none" stroke="#000"/>`)}
          ${icon(12, 12, svg`<path d="M0 0L12 12M12 0L0 12" stroke="#000" stroke-width="1.2"/>`)}
        </div>
      </div>
      <div class="tabs">
        <div class="quick">
          ${icon(18, 18, svg`<path fill="#666" d="M0 0h5v5h-5zM6.5 0h5v5h-5zM13 0h5v5h-5zM0 6.5h5v5h-5zM6.5 6.5h5v5h-5zM13 6.5h5v5h-5zM0 13h5v5h-5zM6.5 13h5v5h-5zM13 13h5v5h-5z"/>`)}${sp(23)}
          ${icon(17, 20, svg`<path d="M0 0H10V7H17V20H0z" fill="#666"/><path d="M11.5 0L17 5.5H11.5z" fill="#666"/>`)}${sp(8)}${tri(8, "#666")}${sp(24)}
          ${icon(18, 18, svg`<path d="M0 0H15L18 3V18H0z" fill="#8f8f8f"/><path fill="#ccc" d="M3.5 1.5h10v5.5h-10zM3 10h12v6.5h-12z"/><path fill="#8f8f8f" d="M9.5 2h2.5v4h-2.5zM4.5 12h9v1.2h-9zM4.5 14.3h9v1.2h-9z"/>`)}${sp(23)}
          ${icon(17, 16, svg`<path d="M7.5 0L1.5 6L7.5 12M1.5 6H9Q15.3 6.5 15.3 15.5" fill="none" stroke="#8f8f8f" stroke-width="2.6"/>`)}${sp(8)}${tri(8, "#8f8f8f")}${sp(17)}
          ${icon(17, 16, svg`<path d="M9.5 0L15.5 6L9.5 12M15.5 6H8Q1.7 6.5 1.7 15.5" fill="none" stroke="#8f8f8f" stroke-width="2.6"/>`)}${sp(7)}${tri(8, "#8f8f8f")}
        </div>
        <div class="tab t1"><div class="mid">${tabCube(true)}${t("Warm-Up1 v1", 93)}</div>${cross("#878787")}</div>
        <div class="tab t2"><div class="mid">${tabCube(false)}${t("Warm-Up2 v1", 93)}</div>${cross("#777")}</div>
        <div class="plus">${icon(17, 17, svg`<path d="M8.5 0V17M0 8.5H17" stroke="#808080" stroke-width="3.6"/>`)}</div>
        <div class="help">
          ${icon(20, 20, svg`<path d="M8.5 1.2A8.9 8.9 0 0 0 1.9 13.6M5 17.3A8.9 8.9 0 1 0 18 6.2" fill="none" stroke="#666" stroke-width="2.3"/><path d="M2.5 16.5L7.5 11.5" stroke="#666" stroke-width="3"/><path d="M5 9.5Q6.5 4.5 10 4L16 10Q15 14.5 10.5 15.2Q7 15.4 5.5 13Z" fill="#666"/><path d="M10 6.5L14.5 2M13.5 10L18 5.5" stroke="#666" stroke-width="2.6"/>`)}
          ${icon(20, 20, svg`<circle cx="10" cy="10" r="9.3" fill="none" stroke="#666" stroke-width="1.4"/><circle cx="10" cy="10" r="7.5" fill="#666"/><path d="M10 4.5V10.5H15" fill="none" stroke="#d4d4d4" stroke-width="1.7"/>`)}
          ${icon(20, 20, svg`<path d="M10 0Q11.5 0 11.5 2Q15.5 3.5 15.5 9V12.5L18.5 16V17H1.5V16L4.5 12.5V9Q4.5 3.5 8.5 2Q8.5 0 10 0zM7.5 18H12.5Q11.8 20 10 20T7.5 18z" fill="#666"/>`)}
          ${icon(20, 20, svg`<circle cx="10" cy="10" r="10" fill="#666"/><path d="M6.7 7.5Q7 4.6 10 4.6T13.3 7.4Q13.3 9 11.5 10.2Q10 11.2 10 12.8" fill="none" stroke="#d6d6d6" stroke-width="2.2"/><circle cx="10" cy="15.8" r="1.5" fill="#d6d6d6"/>`)}
          <div class="avatar">${t("AM", 18)}</div>
        </div>
      </div>
      <div class="ribbon">
        <div class="design">${t("DESIGN", 47)}${tri(7)}</div>
        <div class="rmain">
          <div class="rtabs">
            <div class="rt on">${t("SOLID", 39)}</div>${sp(42)}
            <div class="rt">${t("SURFACE", 58)}</div>${sp(58.5)}
            <div class="rt">${t("SHEET METAL", 85)}</div>${sp(56)}
            <div class="rt">${t("TOOLS", 44)}</div>
          </div>
          <div class="groups">
            ${GROUPS.map(([n, w, lw, ics]) => html`<div class="group" style="width:${w}px">
              <div class="icons">${ics.map(k => icon(40, 40, I[k]))}</div>
              <div class="lab">${t(n, lw)}${tri(7)}</div></div>`)}
          </div>
        </div>
      </div>
      <div class="canvas">
        <svg class="ic" width="1920" height="797" viewBox="0 171 1920 797">${scene}</svg>
        <div class="panel browser">
          ${icon(13, 8, svg`<path d="M6 0V8L0 4zM12.5 0V8L6.5 4z" fill="#333"/>`)}
          <div class="nm">${t("BROWSER", 65)}</div>
          ${icon(12, 12, svg`<circle cx="6" cy="6" r="5.8" fill="#333"/><path d="M3 6H9" stroke="#fff" stroke-width="1.6"/>`)}${sp(8)}${grip}
        </div>
        <div class="tree">
          <div class="row root">
            ${icon(14, 15, svg`<defs><linearGradient id="tg"><stop offset="0" stop-color="#eee"/><stop offset="1" stop-color="#555"/></linearGradient></defs><path d="M.8 14.2H13.3V1z" fill="url(#tg)" stroke="#333" stroke-width="1.3"/>`)}
            <div class="chip">${eye}
              <div class="sel">${icon(20, 20, svg`<path d="M1 5L4 .5H19V15.5L15.5 19.5H1z" fill="#eceef3" stroke="#3f434b" stroke-width="1.5"/><path d="M15.5 5L19 1V15.5L15.5 19z" fill="#9aa0ad"/><path d="M2 5H15.5V18.7H2z" fill="#e4e7ee"/><path d="M2 5L4.5 1.3H18L15.5 5z" fill="#fff"/>`)}${t("Warm-Up2 v1", 89)}</div>
              ${icon(17, 17, svg`<circle cx="8" cy="8.8" r="7.5" fill="#fff" stroke="#444" stroke-width="1.3"/><circle cx="8" cy="8.8" r="2.7" fill="#222"/>`)}
            </div>
          </div>
          ${this.tree("Document Settings", 112, 167, html`${gear("#999")}${sp(17.7)}`)}
          ${this.tree("Named Views", 84, 137, html`${folder}${sp(16.7)}`)}
          ${this.tree("Origin", 34.5, 118, html`${eyeOff}${sp(10.7)}${folder}${sp(17)}`)}
          ${this.tree("Bodies", 41, 128, html`${eye}${sp(10.7)}${folder}${sp(17)}`)}
          ${this.tree("Sketches", 56, 143, html`${eye}${sp(10.7)}${folder}${sp(17)}`)}
        </div>
        <div class="panel comments">
          <div class="nm">${t("COMMENTS", 71)}</div>
          ${icon(12, 12, svg`<circle cx="6" cy="6" r="5.8" fill="#333"/><path d="M3 6H9M6 3V9" stroke="#fff" stroke-width="1.5"/>`)}${sp(8)}${grip}
        </div>
        <div class="nav">
          ${sp(2)}${navIcons.orbit}${sp(4)}${tri(7)}${sp(7)}${navIcons.look}${sp(11)}${navIcons.pan}${sp(9.5)}${navIcons.zoom}${sp(11)}${navIcons.fit}${sp(6)}${tri(7)}${sp(7)}${navIcons.display}${sp(2)}${tri(7)}${sp(8)}${navIcons.grid}${sp(2.5)}${tri(7)}${sp(8)}${navIcons.views}${sp(3)}${tri(7)}
        </div>
      </div>
      <div class="timeline">
        <div class="play">
          ${icon(16, 18, svg`<path d="M0 0H2.6V18H0zM16 0V18L3.2 9z" fill="#4a4a4a"/>`)}
          ${icon(16, 18, svg`<path d="M12 1V17L0 9zM13.3 5.5H16V12.5H13.3z" fill="#4a4a4a"/>`)}
          ${icon(15, 20, svg`<path d="M0 0L15 10L0 20z" fill="#4a4a4a"/>`)}
          ${icon(16, 18, svg`<path d="M4 1V17L16 9zM0 5.5H2.7V12.5H0z" fill="#4a4a4a"/>`)}
          ${icon(16, 18, svg`<path d="M13.4 0H16V18H13.4zM0 0V18L12.8 9z" fill="#4a4a4a"/>`)}
        </div>
        <div class="feats">
          <div class="fi">${TIMELINE.map(k => icon(20, 20, M[k]))}</div>
          ${icon(582, 10, svg`<path d="M11.7 4V11H581.5V4 ${Array.from({ length: 18 }, (_, i) => `M${40.5 + i * 30} 4V10`).join("")}" fill="none" stroke="#cacaca" stroke-width="2.4"/>`)}
        </div>
        ${icon(16, 60, svg`<path d="M6 11H21V15L15 21V51H12.6V21L6 15z" fill="#666"/>`)}
        <div class="tgear">${gear("#8f8f8f")}</div>
      </div>
      <div class="taskbar">
        <div class="start">${icon(20, 20, svg`<path d="M0 3L8.2 1.8V9.6H0zM9.2 1.6L20 0V9.6H9.2zM0 10.6H8.2V18.3L0 17.1zM9.2 10.6H20V20L9.2 18.5z" fill="#fff"/>`)}</div>
        <div class="search">${icon(21, 21, svg`<circle cx="13" cy="7.5" r="6.8" fill="none" stroke="#111" stroke-width="1.5"/><path d="M8 12.5L.5 20" stroke="#111" stroke-width="1.5"/>`)}${t("Type here to search", 163)}</div>
        ${TB.map(([ic, c]) => html`<div class="slot ${c}">${ic}</div>`)}
        <div class="tray">
          ${icon(16, 10, svg`<path d="M.5 9L8 1.5L15.5 9" fill="none" stroke="#fff" stroke-width="1.5"/>`)}${sp(12)}
          ${icon(20, 18, svg`<path d="M1 14Q-1.5 9 3.5 7.5Q6 1 11 1.5Q16 2 16.5 7Q20 8 19 13L15 14z" fill="#9a9fa2"/><path d="M1 13Q0 8 5 7.5Q11 6 13 14H3Q1.5 14 1 13z" fill="#e9ebec"/><circle cx="14.5" cy="12.5" r="5.3" fill="#e02134"/><path d="M12.3 10.3L16.7 14.7M16.7 10.3L12.3 14.7" stroke="#fff" stroke-width="1.5"/>`)}${sp(10)}
          ${icon(20, 20, svg`<path d="M.7 4L19.3 1V15.5L.7 17z" fill="none" stroke="#fff" stroke-width="1.4"/><path d="M5.5 8.5Q8 5 12 7M12 4.5V7.3H9M13.5 10Q12 14 7 12.5M7 15V12.3H10" fill="none" stroke="#fff" stroke-width="1.3"/><circle cx="15.5" cy="15.8" r="4.6" fill="#ff9b0c"/>`)}${sp(11)}
          ${icon(19, 12, svg`<rect x=".6" y=".6" width="16.4" height="10.8" fill="none" stroke="#fff" stroke-width="1.2"/><rect x="2.2" y="2.2" width="13.2" height="7.6" fill="#fff"/><path d="M18.3 3.8V8.2" stroke="#fff" stroke-width="1.4"/>`)}${sp(13)}
          ${icon(16, 16, svg`<path d="M.8 15.5Q1.5 2 15 1M4.3 15.5Q5.2 6 15 5M8 15.5Q8.7 9.8 15 9" fill="none" stroke="#cdd3d6" stroke-width="1.4"/><circle cx="13.5" cy="14" r="1.8" fill="#fff"/>`)}${sp(11)}
          ${icon(19, 14, svg`<path d="M.7 4.5H3.5L7 1V13L3.5 9.5H.7z" fill="none" stroke="#fff" stroke-width="1.3"/><path d="M10.5 3.5L18 11M18 3.5L10.5 11" stroke="#fff" stroke-width="1.3"/>`)}
          <div class="clock">${t("10:01 AM", 61)}${t("2/1/2021", 59)}</div>${sp(25.5)}
          ${icon(20, 20, svg`<path d="M.7 1H19.3V16.5H12.5L10 19.5L7.5 16.5H.7z" fill="none" stroke="#fff" stroke-width="1.4"/>`)}${sp(26)}
          ${icon(2, 50, svg`<path d="M1 0V50" stroke="#6f7c82" stroke-width="1"/>`)}
        </div>
      </div>`;
  }
}
